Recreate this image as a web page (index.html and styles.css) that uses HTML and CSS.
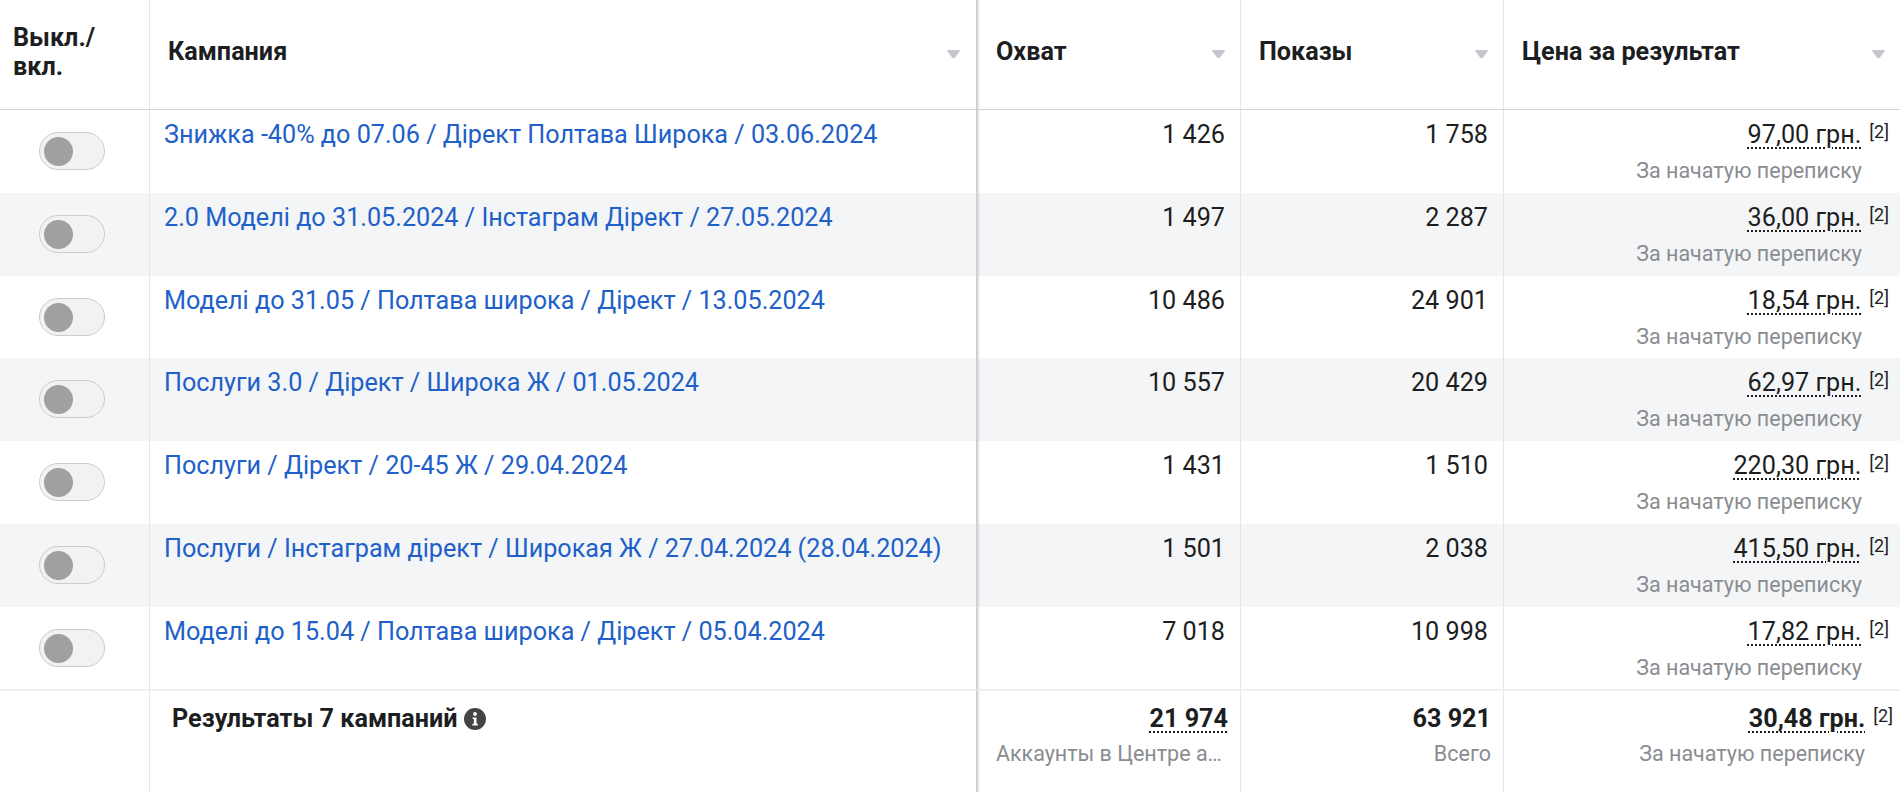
FILE: index.html
```html
<!DOCTYPE html>
<html lang="en">
<head>
  <meta charset="UTF-8" />
  <title>Кампании</title>
  <link rel="stylesheet" href="styles.css">
</head>
<body>
  <table class="grid">
    <colgroup>
      <col class="col-toggle"><col class="col-name"><col class="col-num"><col class="col-num"><col class="col-cost">
    </colgroup>
    <thead>
      <tr>
        <th class="head-toggle">Выкл./<br>вкл.</th>
        <th class="split"><div class="head"><span>Кампания</span><i class="sort"></i></div></th>
        <th><div class="head"><span>Охват</span><i class="sort"></i></div></th>
        <th><div class="head"><span>Показы</span><i class="sort"></i></div></th>
        <th><div class="head"><span>Цена за результат</span><i class="sort"></i></div></th>
      </tr>
    </thead>
    <tbody id="rows">
      <tr>
        <td><span class="toggle"></span></td>
        <td class="split"><a class="link" href="#">Знижка -40% до 07.06 / Дірект Полтава Широка / 03.06.2024</a></td>
        <td class="num">1 426</td>
        <td class="num">1 758</td>
        <td class="num cost"><span class="dotted">97,00 грн.</span><sup>[2]</sup><div class="sub">За начатую переписку</div></td>
      </tr>
      <tr>
        <td><span class="toggle"></span></td>
        <td class="split"><a class="link" href="#">2.0 Моделі до 31.05.2024 / Інстаграм Дірект / 27.05.2024</a></td>
        <td class="num">1 497</td>
        <td class="num">2 287</td>
        <td class="num cost"><span class="dotted">36,00 грн.</span><sup>[2]</sup><div class="sub">За начатую переписку</div></td>
      </tr>
      <tr class="row-short">
        <td><span class="toggle"></span></td>
        <td class="split"><a class="link" href="#">Моделі до 31.05 / Полтава широка / Дірект / 13.05.2024</a></td>
        <td class="num">10 486</td>
        <td class="num">24 901</td>
        <td class="num cost"><span class="dotted">18,54 грн.</span><sup>[2]</sup><div class="sub">За начатую переписку</div></td>
      </tr>
      <tr>
        <td><span class="toggle"></span></td>
        <td class="split"><a class="link" href="#">Послуги 3.0 / Дірект / Широка Ж / 01.05.2024</a></td>
        <td class="num">10 557</td>
        <td class="num">20 429</td>
        <td class="num cost"><span class="dotted">62,97 грн.</span><sup>[2]</sup><div class="sub">За начатую переписку</div></td>
      </tr>
      <tr>
        <td><span class="toggle"></span></td>
        <td class="split"><a class="link" href="#">Послуги / Дірект / 20-45 Ж / 29.04.2024</a></td>
        <td class="num">1 431</td>
        <td class="num">1 510</td>
        <td class="num cost"><span class="dotted">220,30 грн.</span><sup>[2]</sup><div class="sub">За начатую переписку</div></td>
      </tr>
      <tr>
        <td><span class="toggle"></span></td>
        <td class="split"><a class="link" href="#">Послуги / Інстаграм дірект / Широкая Ж / 27.04.2024 (28.04.2024)</a></td>
        <td class="num">1 501</td>
        <td class="num">2 038</td>
        <td class="num cost"><span class="dotted">415,50 грн.</span><sup>[2]</sup><div class="sub">За начатую переписку</div></td>
      </tr>
      <tr>
        <td><span class="toggle"></span></td>
        <td class="split"><a class="link" href="#">Моделі до 15.04 / Полтава широка / Дірект / 05.04.2024</a></td>
        <td class="num">7 018</td>
        <td class="num">10 998</td>
        <td class="num cost"><span class="dotted">17,82 грн.</span><sup>[2]</sup><div class="sub">За начатую переписку</div></td>
      </tr>
    </tbody>
    <tfoot>
      <tr>
        <td></td>
        <td class="split total-name">
          <div class="total-label">Результаты 7 кампаний
            <svg class="info" viewBox="0 0 22 22" aria-hidden="true">
              <circle cx="11" cy="11" r="11" fill="#444"/>
              <circle cx="11" cy="6" r="1.9" fill="#fff"/>
              <path d="M8.6 9.4h3.9v6.4h1.3v1.7H8.4v-1.7h1.5v-4.7H8.6z" fill="#fff"/>
            </svg>
          </div>
        </td>
        <td class="num"><span class="dotted">21 974</span><div class="sub clip">Аккаунты в Центре а…</div></td>
        <td class="num">63 921<div class="sub">Всего</div></td>
        <td class="num cost"><span class="dotted">30,48 грн.</span><sup>[2]</sup><div class="sub">За начатую переписку</div></td>
      </tr>
    </tfoot>
  </table>
</body>
</html>
```

FILE: styles.css
```css
* { box-sizing: border-box; }
html, body { margin: 0; height: 792px; overflow: hidden; background: #fff; }
body { font-family: Roboto, "Liberation Sans", sans-serif; font-size: 25.2px; color: #1c1e21; }

.grid { width: 1900px; table-layout: fixed; border-collapse: separate; border-spacing: 0; }
.col-toggle { width: 150px; }
.col-name { width: 828px; }
.col-num { width: 263px; }
.col-cost { width: 396px; }

th, td { padding: 0; border-right: 1px solid #e4e5e7; vertical-align: top; text-align: left; }
th:last-child, td:last-child { border-right: 0; }
th.split, td.split { border-right: 2px solid #d0d1d4; }
.split + th, .split + td { box-shadow: inset 3px 0 2px -2px rgba(0, 0, 0, .1); }

th { height: 110px; border-bottom: 1px solid #d3d4d6; font-weight: 700; line-height: 30px; vertical-align: middle; }
.head-toggle { padding: 0 0 6px 13px; line-height: 29px; }
.head { display: flex; justify-content: space-between; align-items: center; padding: 0 15px 5px 18px; }
.sort { width: 13px; height: 8px; background: #c4c7cf; clip-path: polygon(6% 0, 94% 0, 100% 14%, 58% 100%, 42% 100%, 0 14%); margin-top: 4px; }
.split .head { padding-left: 18px; padding-right: 16px; }

tbody td { height: 83px; padding-top: 10px; line-height: 30px; }
tbody .row-short td { height: 82px; }
tbody tr:nth-child(even) td { background: #f4f5f7; }
tbody tr:last-child td { height: 84px; border-bottom: 2px solid #eeeff0; }

.toggle { display: block; width: 66px; height: 38px; margin: 12px 0 0 39px; border: 1px solid #ccc; border-radius: 19px; background: #f2f2f2; position: relative; }
.toggle::after { content: ""; position: absolute; left: 4px; top: 4px; width: 29px; height: 29px; border-radius: 50%; background: #a0a0a0; }

.link { display: block; padding-left: 15px; color: #2060c8; text-decoration: none; white-space: nowrap; margin-left: -1px; }

.num { padding-right: 15px; text-align: right; }
.cost { padding-right: 11px; }
.cost .sub { padding-right: 27px; }
.dotted { text-decoration: underline dotted 2px; text-underline-offset: 4px; }
sup { font-size: 18px; line-height: 14px; margin-left: 8px; vertical-align: 5px; }
.sub { margin-top: 9px; font-size: 21.5px; line-height: 24px; color: #8a8d91; white-space: nowrap; }
.clip { text-align: right; padding-right: 6px; }

tfoot td { height: 101px; padding-top: 13px; line-height: 30px; }
tfoot .num { padding-right: 12px; font-weight: 700; }
tfoot .cost { padding-right: 7px; }
tfoot .cost .sub { padding-right: 28px; }
tfoot .sub { margin-top: 8px; }
tfoot .sub, tfoot sup { font-weight: 400; }
.total-label { padding-left: 22px; font-weight: 700; }
.info { width: 22px; height: 22px; vertical-align: -3px; }
```
